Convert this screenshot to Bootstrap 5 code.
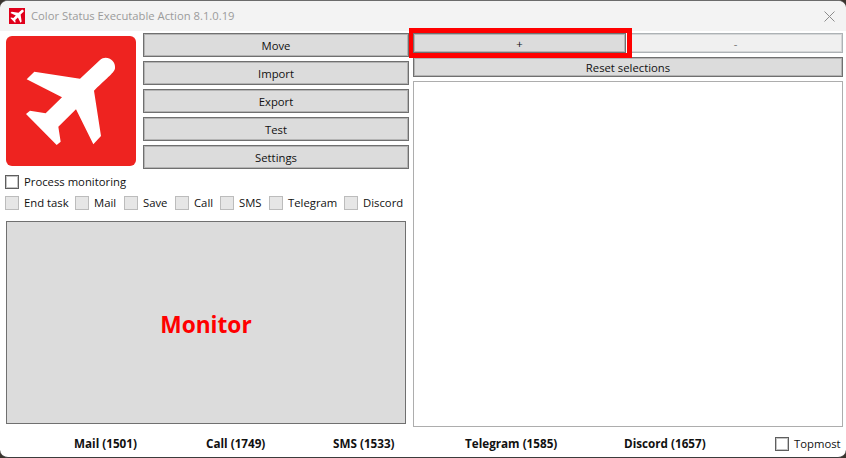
<!doctype html>
<html lang="en">
<head>
<meta charset="utf-8">
<title>Color Status Executable Action</title>
<link href="https://cdn.jsdelivr.net/npm/bootstrap@5.3.0/dist/css/bootstrap.min.css" rel="stylesheet">
<style>
html,body{margin:0;height:458px;overflow:hidden;background:#3a342e}
body{font-family:"Open Sans","Noto Sans",sans-serif;font-size:11.3px;color:#111}
.win{width:846px;height:458px;background:#fff;border-radius:8px;overflow:hidden;border-top:1px solid #6b6b6b;border-bottom:1px solid #3c3c3c}
.tbar{height:30px;background:#f3f3f3;padding-left:9px;color:#9b9b9b;font-size:11.25px;flex:none}
.tbar-ico{width:16px;height:16px;background:#e0001b;margin-right:6px;flex:none}
.tbar-close{margin-left:auto;margin-right:11px;width:11px;height:11px}
.wmain{padding:2px 3px 0 6px;flex:1 1 auto;min-height:0}
.leftc{width:403px;flex:none}
.rightc{width:430px;margin-left:4px;flex:none}
.logo{width:130px;height:130px;background:#ee2320;border-radius:6px;margin-top:3px;flex:none}
.stack{width:266px;margin-left:7px;gap:4px}
.wbtn{background:#dcdcdc;border:1px solid #707070;border-radius:0;height:24px;padding:2px 0 0;font-size:11.3px;line-height:1;color:#111;box-shadow:inset 0 0 0 1px #b4b4b4}
.wbtn:hover{background:#dcdcdc;color:#111;border-color:#707070}
.rrow{gap:2px}
.wbtn.sm{height:20px}
.wbtn.plus{width:213px;position:relative;box-shadow:inset 0 0 0 1px #b4b4b4,1px 0 0 #fff}
.wbtn.plus::after{content:"";position:absolute;top:-6px;left:-5px;right:-7px;bottom:-6px;border:solid #f00;border-width:5px 5px 5px 4px;z-index:2;pointer-events:none}
.wbtn.minus{flex:1 1 auto;background:#f0f0f0;border-color:#adb2b5;color:#777;box-shadow:inset 0 0 0 1px #d4d6d7}
.reset{width:100%;margin-top:4px}
.lbox{height:346px;margin-top:4px;border:1px solid #adadad;background:#fff}
.form-check-input.ck[type=checkbox]{width:14px;height:14px;margin:0;border:1px solid #5e5e5e;border-radius:0;flex:none;background:#fff;box-shadow:inset 0 0 0 1px #c4c4c4}
.form-check-input.ck[type=checkbox]:disabled{opacity:1;background:#e6e6e6;border-color:#bcbcbc;box-shadow:none}
.ckline{gap:5px;line-height:14px;white-space:nowrap}
.pm{margin-top:6px;margin-left:-1px}
.tasks{margin-top:7px;margin-left:-1px;display:grid;grid-template-columns:70px 49px 51px 45px 49px 75px auto}
.monitor{width:400px;height:203px;margin-top:11px;padding-top:3px;background:#dcdcdc;border:1px solid #707070;color:#f00;font:700 22.7px "Open Sans","Noto Sans",sans-serif}
.foot{height:30px;flex:none;display:grid;grid-template-columns:132px 127px 132px 159px 151px auto;padding:4px 0 0 74px;font-weight:700;font-size:11.7px;white-space:nowrap}
.topm{font-weight:400;font-size:11.3px}
</style>
</head>
<body>
<div class="win d-flex flex-column">
  <div class="tbar d-flex align-items-center">
    <svg class="tbar-ico" viewBox="50 140 320 320"><path fill="#fff" d="M240 236 300 180C318 164 348 180 345 205 344 215 335 222 282 272L303 408 280 433 228 328 175 380 182 425 170 435 78 342 90 332 137 340 186 292 80 238 103 215Z"/></svg>
    <span>Color Status Executable Action 8.1.0.19</span>
    <svg class="tbar-close" viewBox="0 0 11 11"><path d="M.5.5l10 10M10.500.5l-10 10" stroke="#8c8c8c" fill="none"/></svg>
  </div>
  <div class="wmain d-flex">
    <div class="leftc">
      <div class="d-flex">
        <div class="logo">
          <svg width="130" height="130" viewBox="18 108 390 390"><path fill="#fff" d="M240 236 300 180C318 164 348 180 345 205 344 215 335 222 282 272L303 408 280 433 228 328 175 380 182 425 170 435 78 342 90 332 137 340 186 292 80 238 103 215Z"/></svg>
        </div>
        <div class="stack d-flex flex-column">
          <button class="btn wbtn" type="button">Move</button>
          <button class="btn wbtn" type="button">Import</button>
          <button class="btn wbtn" type="button">Export</button>
          <button class="btn wbtn" type="button">Test</button>
          <button class="btn wbtn" type="button">Settings</button>
        </div>
      </div>
      <div class="pm d-flex align-items-center ckline"><input class="form-check-input ck" type="checkbox" aria-label="Process monitoring"><span>Process monitoring</span></div>
      <div class="tasks">
        <div class="d-flex align-items-center ckline"><input class="form-check-input ck" type="checkbox" disabled aria-label="End task"><span>End task</span></div>
        <div class="d-flex align-items-center ckline"><input class="form-check-input ck" type="checkbox" disabled aria-label="Mail"><span>Mail</span></div>
        <div class="d-flex align-items-center ckline"><input class="form-check-input ck" type="checkbox" disabled aria-label="Save"><span>Save</span></div>
        <div class="d-flex align-items-center ckline"><input class="form-check-input ck" type="checkbox" disabled aria-label="Call"><span>Call</span></div>
        <div class="d-flex align-items-center ckline"><input class="form-check-input ck" type="checkbox" disabled aria-label="SMS"><span>SMS</span></div>
        <div class="d-flex align-items-center ckline"><input class="form-check-input ck" type="checkbox" disabled aria-label="Telegram"><span>Telegram</span></div>
        <div class="d-flex align-items-center ckline"><input class="form-check-input ck" type="checkbox" disabled aria-label="Discord"><span>Discord</span></div>
      </div>
      <div class="monitor d-flex align-items-center justify-content-center">Monitor</div>
    </div>
    <div class="rightc">
      <div class="d-flex rrow">
        <button class="btn wbtn sm plus" type="button">+</button>
        <button class="btn wbtn sm minus" type="button">-</button>
      </div>
      <button class="btn wbtn sm reset" type="button">Reset selections</button>
      <div class="lbox"></div>
    </div>
  </div>
  <div class="foot align-items-center">
    <span>Mail (1501)</span>
    <span>Call (1749)</span>
    <span>SMS (1533)</span>
    <span>Telegram (1585)</span>
    <span>Discord (1657)</span>
    <div class="d-flex align-items-center ckline topm"><input class="form-check-input ck" type="checkbox" aria-label="Topmost"><span>Topmost</span></div>
  </div>
</div>
</body>
</html>
